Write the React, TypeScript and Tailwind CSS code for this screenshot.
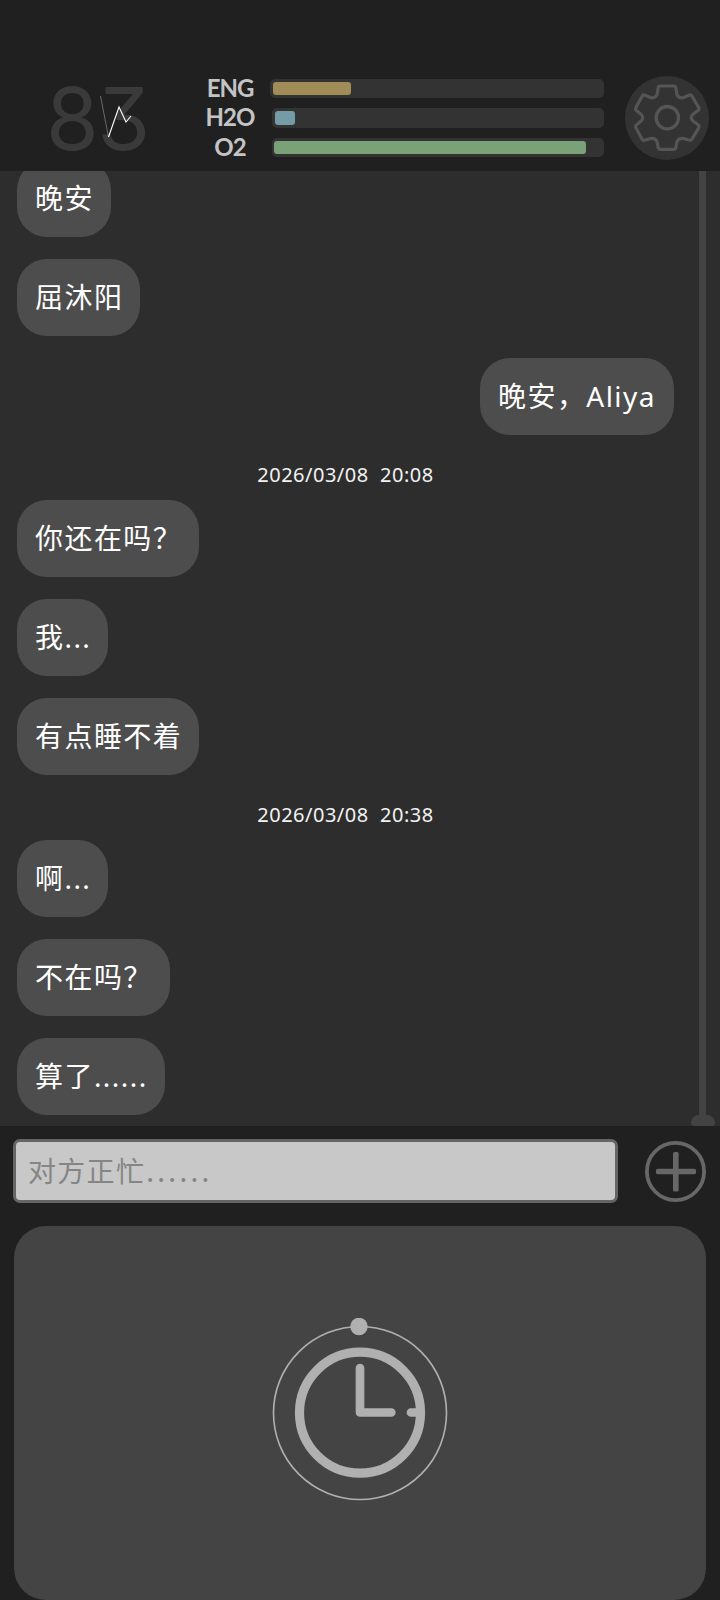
import { clsx } from 'clsx'

interface Gauge {
  label: string
  value: number
  track: string
  fill: string
}

interface Entry {
  kind: 'in' | 'out' | 'time'
  text: string
  width?: string
}

const gauges: Gauge[] = [
  { label: 'ENG', value: 78, track: 'ml-0 h-[19px] pl-[3px]', fill: 'h-[13px] bg-[#a18c57]' },
  { label: 'H2O', value: 20, track: 'ml-[2px] h-[20px] pl-[3px]', fill: 'h-[14px] bg-[#739ca6]' },
  { label: 'O2', value: 312, track: 'ml-[2px] h-[19px] pl-[2px]', fill: 'h-[13px] bg-[#7aa177]' },
]

const entries: Entry[] = [
  { kind: 'in', text: '晚安', width: 'w-[94px]' },
  { kind: 'in', text: '屈沐阳', width: 'w-[123px]' },
  { kind: 'out', text: '晚安，Aliya', width: 'w-[194px]' },
  { kind: 'time', text: '2026/03/08  20:08' },
  { kind: 'in', text: '你还在吗？', width: 'w-[182px]' },
  { kind: 'in', text: '我...', width: 'w-[91px]' },
  { kind: 'in', text: '有点睡不着', width: 'w-[182px]' },
  { kind: 'time', text: '2026/03/08  20:38' },
  { kind: 'in', text: '啊...', width: 'w-[91px]' },
  { kind: 'in', text: '不在吗？', width: 'w-[153px]' },
  { kind: 'in', text: '算了......', width: 'w-[148px]' },
]

function HeartRate() {
  return (
    <div className="relative ml-[48px] h-[84px] w-[110px]">
      <div className="-ml-[2px] origin-left scale-x-[0.98] pt-px tracking-[-1.5px] whitespace-nowrap font-['Inter',sans-serif] text-[87px] leading-[84px] font-normal text-[#3a3a3a] [font-feature-settings:'cv09']">
        83
      </div>
      <svg className="absolute top-0 left-0 h-[84px] w-[110px]" viewBox="0 0 110 84" fill="none">
        <path d="M52.5 20 60.5 61" stroke="#999" strokeWidth="0.6" />
        <path d="M60.5 61 71 31 78 46 83 40" stroke="#fff" strokeWidth="1.1" />
      </svg>
    </div>
  )
}

function Gauges() {
  return (
    <div className="ml-[45px] flex flex-col gap-[10px]">
      {gauges.map((g) => (
        <div key={g.label} className="flex h-[19.5px] items-center">
          <div className="w-[54px] pb-[2px] text-center font-['Lato',sans-serif] text-[24px] leading-[20px] font-bold tracking-[-1px] text-[#c4c4c4]">
            {g.label}
          </div>
          <div className="ml-[13px] w-[334px]">
            <div className={clsx('flex items-center rounded-[5px] bg-[#333]', g.track)}>
              <div className={clsx('rounded-[3px]', g.fill)} style={{ width: g.value }} />
            </div>
          </div>
        </div>
      ))}
    </div>
  )
}

function GearButton() {
  return (
    <button className="ml-[21px] size-[84px] rounded-full bg-[#333]" aria-label="设置">
      <svg viewBox="0 0 252 252" fill="none" stroke="#555" strokeWidth="9.500" strokeLinejoin="round">
        <path d="M104 30H148Q151 30 152 33L156 56Q160 66 172 66L194 57Q198 56 200 59L222 96Q223 99 221 102L204 115Q193 125 204 135L221 148Q223 151 222 154L200 191Q198 194 194 193L172 187Q160 187 156 197L152 217Q151 220 148 220H104Q101 220 100 217L96 197Q92 187 80 187L58 193Q54 194 52 191L32 154Q31 151 33 148L48 135Q59 125 48 115L33 102Q31 99 32 96L52 59Q54 56 58 57L80 66Q92 66 96 56L100 33Q101 30 104 30Z" />
        <circle cx="127" cy="125" r="33.500" strokeWidth="10" />
      </svg>
    </button>
  )
}

function Message({ kind, text, width }: Entry) {
  if (kind === 'time') {
    return (
      <div className="h-[43px] shrink-0 text-center font-['Noto_Sans',sans-serif] text-[20px] leading-[36px] tracking-[0.5px] whitespace-pre text-[#f2f2f2]">
        {text}
      </div>
    )
  }
  return (
    <div
      className={clsx(
        "mb-[22px] h-[77px] shrink-0 rounded-[30px] bg-[#4d4d4d] pl-[18px] font-['Noto_Sans','Noto_Sans_CJK_SC',sans-serif] text-[28px] leading-[77px] tracking-[1.45px] whitespace-nowrap text-white last:mb-0",
        kind === 'out' ? 'self-end' : 'self-start',
        width,
      )}
    >
      {text}
    </div>
  )
}

function TimerIcon() {
  return (
    <svg className="mt-[92px] h-[184px] w-[176px]" viewBox="0 0 176 184" fill="none" stroke="#b0b0b0">
      <circle cx="88" cy="95" r="86.500" strokeWidth="1.600" />
      <circle cx="87" cy="8.500" r="8.700" fill="#b0b0b0" stroke="none" />
      <circle cx="88" cy="94.700" r="60.500" strokeWidth="9.200" />
      <path d="M88 50V94.500H119.300M139 94.500H145" strokeWidth="8.700" strokeLinecap="round" strokeLinejoin="round" />
    </svg>
  )
}

export default function App() {
  return (
    <div className="flex h-[1600px] w-[720px] flex-col overflow-hidden bg-[#202020] font-['Noto_Sans_CJK_SC',sans-serif]">
      {/* Vitals */}
      <header className="flex h-[171px] shrink-0 items-start pt-[76px]">
        <HeartRate />
        <div className="pt-[3px]">
          <Gauges />
        </div>
        <GearButton />
      </header>

      {/* Conversation */}
      <main className="flex h-[955px] shrink-0 overflow-hidden bg-[#2d2d2d]">
        <div className="flex w-[674px] flex-col justify-end pb-[11px] pl-[17px]">
          {entries.map((entry, i) => (
            <Message key={i} {...entry} />
          ))}
        </div>
        <div className="ml-[17px] flex w-[24px] flex-col">
          <div className="ml-[8px] w-[7px] flex-1 bg-[#434343]" />
          <div className="h-[11px] w-[24px] rounded-t-[10px] rounded-b-[4px] bg-[#434343]" />
        </div>
      </main>

      {/* Reply box */}
      <div className="flex h-[100px] shrink-0 items-start pt-[13px] pl-[13px]">
        <div className="h-[64px] w-[605px] rounded-[7px] border-[3px] border-[#656565] bg-[#c8c8c8] pl-[12px] text-[28px] leading-[56px] tracking-[1.3px] text-[#858585]">
          对方正忙<span className="ml-[1px] tracking-[3.3px]">......</span>
        </div>
        <button className="mt-[2px] ml-[27px] size-[61px]" aria-label="更多">
          <svg viewBox="0 0 61 61" fill="none" stroke="#676767">
            <circle cx="30.500" cy="30.500" r="28.600" strokeWidth="3.800" />
            <rect x="11" y="27.800" width="40" height="5.400" rx="1.800" fill="#676767" stroke="none" />
            <rect x="28" y="11" width="5.600" height="39.500" rx="1.500" fill="#676767" stroke="none" />
          </svg>
        </button>
      </div>

      <section className="mx-[14px] flex h-[374px] shrink-0 justify-center rounded-[32px] bg-[#444]">
        <TimerIcon />
      </section>
    </div>
  )
}
